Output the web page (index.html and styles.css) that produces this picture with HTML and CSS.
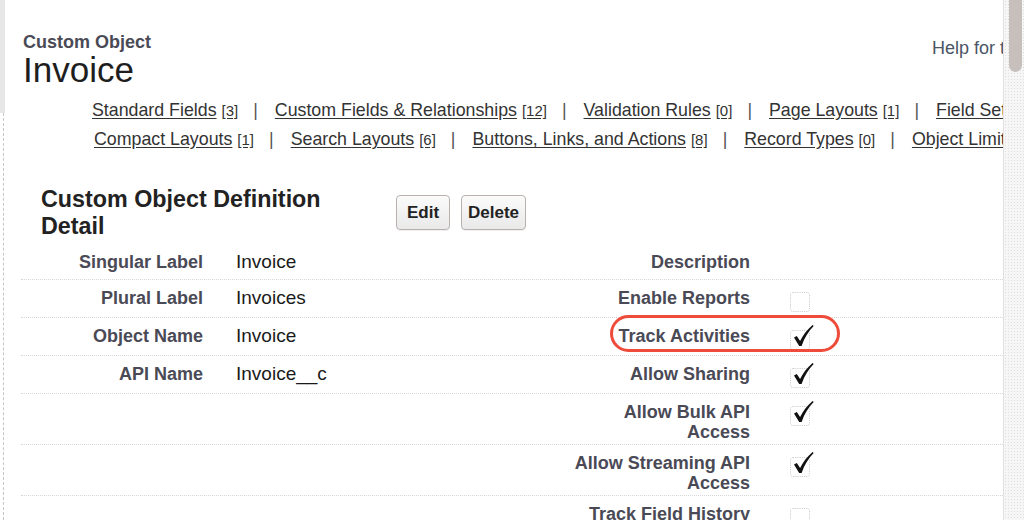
FILE: index.html
```html
<!DOCTYPE html>
<html lang="en">
<head>
<meta charset="utf-8">
<title>Custom Object: Invoice</title>
<link rel="stylesheet" href="styles.css">
</head>
<body>
<div class="frame">
  <div class="gutter"><div class="gutter-top"></div><div class="gutter-line"></div></div>
  <main class="page">
    <header class="ptop">
      <div class="ptitle">
        <div class="ptype">Custom Object</div>
        <h1 class="pname">Invoice</h1>
      </div>
      <a class="help">Help for this Page</a>
    </header>

    <nav class="rlinks">
      <div class="rline">
        <a class="lnk"><span class="lt">Standard Fields</span> <span class="cnt">[3]</span></a><span class="sep">|</span><a class="lnk"><span class="lt">Custom Fields &amp; Relationships</span> <span class="cnt">[12]</span></a><span class="sep">|</span><a class="lnk"><span class="lt">Validation Rules</span> <span class="cnt">[0]</span></a><span class="sep">|</span><a class="lnk"><span class="lt">Page Layouts</span> <span class="cnt">[1]</span></a><span class="sep">|</span><a class="lnk"><span class="lt">Field Sets</span> <span class="cnt">[0]</span></a>
      </div>
      <div class="rline second">
        <a class="lnk"><span class="lt">Compact Layouts</span> <span class="cnt">[1]</span></a><span class="sep">|</span><a class="lnk"><span class="lt">Search Layouts</span> <span class="cnt">[6]</span></a><span class="sep">|</span><a class="lnk"><span class="lt">Buttons, Links, and Actions</span> <span class="cnt">[8]</span></a><span class="sep">|</span><a class="lnk"><span class="lt">Record Types</span> <span class="cnt">[0]</span></a><span class="sep">|</span><a class="lnk"><span class="lt">Object Limits</span></a>
      </div>
    </nav>

    <section class="block">
      <div class="bhead">
        <h2 class="btitle">Custom Object Definition Detail</h2>
        <div class="btns">
          <button class="btn edit">Edit</button>
          <button class="btn">Delete</button>
        </div>
      </div>

      <div class="detail">
        <div class="row first">
          <div class="lbl">Singular Label</div>
          <div class="val">Invoice</div>
          <div class="lbl">Description</div>
          <div class="chk"></div>
        </div>
        <div class="row">
          <div class="lbl">Plural Label</div>
          <div class="val">Invoices</div>
          <div class="lbl">Enable Reports</div>
          <div class="chk"><svg class="cb" width="26" height="28" viewBox="0 0 26 28"><rect x="0.5" y="6.5" width="19" height="19" rx="2.5" fill="none" stroke="#cfcfcf" stroke-dasharray="1.2 1"/></svg></div>
        </div>
        <div class="row">
          <div class="lbl">Object Name</div>
          <div class="val">Invoice</div>
          <div class="lbl">Track Activities</div>
          <div class="chk"><svg class="cb" width="26" height="28" viewBox="0 0 26 28"><rect x="0.5" y="6.5" width="19" height="19" rx="2.5" fill="none" stroke="#cfcfcf" stroke-dasharray="1.2 1"/><path d="M4 13.4 L6.8 11.9 L10.1 17 C13 11 17 5.6 22.6 0.9 L23.7 2 C18.8 6.8 14.4 13.6 11.6 22 L9.2 22 Z" fill="#111"/></svg></div>
          <div class="callout"></div>
        </div>
        <div class="row">
          <div class="lbl">API Name</div>
          <div class="val">Invoice__c</div>
          <div class="lbl">Allow Sharing</div>
          <div class="chk"><svg class="cb" width="26" height="28" viewBox="0 0 26 28"><rect x="0.5" y="6.5" width="19" height="19" rx="2.5" fill="none" stroke="#cfcfcf" stroke-dasharray="1.2 1"/><path d="M4 13.4 L6.8 11.9 L10.1 17 C13 11 17 5.6 22.6 0.9 L23.7 2 C18.8 6.8 14.4 13.6 11.6 22 L9.2 22 Z" fill="#111"/></svg></div>
        </div>
        <div class="row">
          <div class="lbl"></div>
          <div class="val"></div>
          <div class="lbl">Allow Bulk API Access</div>
          <div class="chk"><svg class="cb" width="26" height="28" viewBox="0 0 26 28"><rect x="0.5" y="6.5" width="19" height="19" rx="2.5" fill="none" stroke="#cfcfcf" stroke-dasharray="1.2 1"/><path d="M4 13.4 L6.8 11.9 L10.1 17 C13 11 17 5.6 22.6 0.9 L23.7 2 C18.8 6.8 14.4 13.6 11.6 22 L9.2 22 Z" fill="#111"/></svg></div>
        </div>
        <div class="row">
          <div class="lbl"></div>
          <div class="val"></div>
          <div class="lbl">Allow Streaming API Access</div>
          <div class="chk"><svg class="cb" width="26" height="28" viewBox="0 0 26 28"><rect x="0.5" y="6.5" width="19" height="19" rx="2.5" fill="none" stroke="#cfcfcf" stroke-dasharray="1.2 1"/><path d="M4 13.4 L6.8 11.9 L10.1 17 C13 11 17 5.6 22.6 0.9 L23.7 2 C18.8 6.8 14.4 13.6 11.6 22 L9.2 22 Z" fill="#111"/></svg></div>
        </div>
        <div class="row">
          <div class="lbl"></div>
          <div class="val"></div>
          <div class="lbl">Track Field History</div>
          <div class="chk"><svg class="cb" width="26" height="28" viewBox="0 0 26 28"><rect x="0.5" y="6.5" width="19" height="19" rx="2.5" fill="none" stroke="#cfcfcf" stroke-dasharray="1.2 1"/></svg></div>
        </div>
      </div>
    </section>
  </main>
  <div class="scrollbar"><div class="thumb"></div></div>
</div>
</body>
</html>
```

FILE: styles.css
```css
html, body {
  margin: 0;
  padding: 0;
  height: 520px;
  overflow: hidden;
  background: #ffffff;
  font-family: "Liberation Sans", Arial, Helvetica, sans-serif;
  color: #222;
}

.frame {
  display: flex;
  height: 520px;
}

/* left gutter */
.gutter {
  flex: 0 0 6px;
  display: flex;
  flex-direction: column;
}
.gutter-top {
  width: 5px;
  height: 113px;
  background: #e7e7e7;
}
.gutter-line {
  flex: 1;
  margin-left: 3px;
  border-left: 1px dashed #cbc4c4;
}

/* main page */
.page {
  flex: 1;
  min-width: 0;
  overflow: hidden;
  background: #fff;
}

.ptop {
  display: flex;
  align-items: flex-start;
  padding: 32px 0 0 17px;
  white-space: nowrap;
}
.ptitle {
  flex: 0 0 909px;
}
.ptype {
  font-size: 18px;
  line-height: 20px;
  font-weight: bold;
  color: #4a4a56;
}
.pname {
  margin: 0;
  font-size: 35px;
  line-height: 36px;
  font-weight: normal;
  color: #1e1e1e;
}
.help {
  margin-top: 6px;
  font-size: 18px;
  line-height: 20px;
  color: #4a5565;
}

/* related list links */
.rlinks {
  margin-top: 8px;
}
.rline {
  white-space: nowrap;
  font-size: 17.8px;
  line-height: 29px;
  padding-left: 86px;
  color: #333;
}
.rline.second {
  padding-left: 88px;
}
.lnk {
  color: #333;
}
.lt {
  text-decoration: underline;
  text-underline-offset: 2px;
}
.cnt {
  font-size: 15px;
  text-decoration: underline;
  text-underline-offset: 2px;
}
.sep {
  padding: 0 17px 0 15px;
  color: #555;
}

/* page block */
.block {
  margin: 32px 0 0 15px;
}
.bhead {
  display: flex;
  align-items: flex-start;
}
.btitle {
  flex: 0 0 340px;
  box-sizing: border-box;
  margin: 0;
  padding-left: 20px;
  padding-right: 20px;
  font-size: 23.3px;
  line-height: 27px;
  font-weight: bold;
  color: #222;
}
.btns {
  display: flex;
  gap: 11px;
  margin: 9px 0 0 35px;
}
.btn {
  box-sizing: border-box;
  min-width: 54px;
  height: 35px;
  padding: 0 6px;
  border: 1px solid #b8b1ae;
  border-radius: 4px;
  background: linear-gradient(#fbfbfb, #e9e9e9);
  box-shadow: 0 1px 0 rgba(0,0,0,0.06);
  font-family: "Liberation Sans", Arial, Helvetica, sans-serif;
  font-size: 17px;
  font-weight: bold;
  color: #222;
}

/* detail table */
.row {
  position: relative;
  display: grid;
  grid-template-columns: 194px 350px 197px 1fr;
  box-sizing: border-box;
  min-height: 38px;
  border-bottom: 1px dotted #d6d6d6;
}
.row.first {
  min-height: 40px;
}
.lbl {
  padding: 8px 12px 2px 0;
  text-align: right;
  font-size: 18px;
  line-height: 20px;
  font-weight: bold;
  color: #4a4a56;
}
.val {
  padding: 8px 0 2px 21px;
  font-size: 19px;
  line-height: 20px;
  color: #1a1a1a;
}
.row.first .lbl,
.row.first .val {
  padding-top: 12px;
}
.chk {
  padding: 6px 0 0 28px;
}
.cb {
  display: block;
}

/* annotation */
.callout {
  position: absolute;
  left: 589px;
  top: -3px;
  width: 230px;
  height: 37px;
  box-sizing: border-box;
  border: 3px solid #ef4b3b;
  border-radius: 19px;
  pointer-events: none;
}

/* scrollbar */
.scrollbar {
  flex: 0 0 21px;
  box-sizing: border-box;
  border-left: 1px solid #e2e2e2;
  background-color: #f6f6f6;
  background-image: radial-gradient(#dedede 0.6px, transparent 0.8px);
  background-size: 3px 3px;
}
.thumb {
  margin-left: 5px;
  width: 13px;
  height: 72px;
  background: #c7bfbc;
  border-radius: 0 0 7px 7px;
}
```
